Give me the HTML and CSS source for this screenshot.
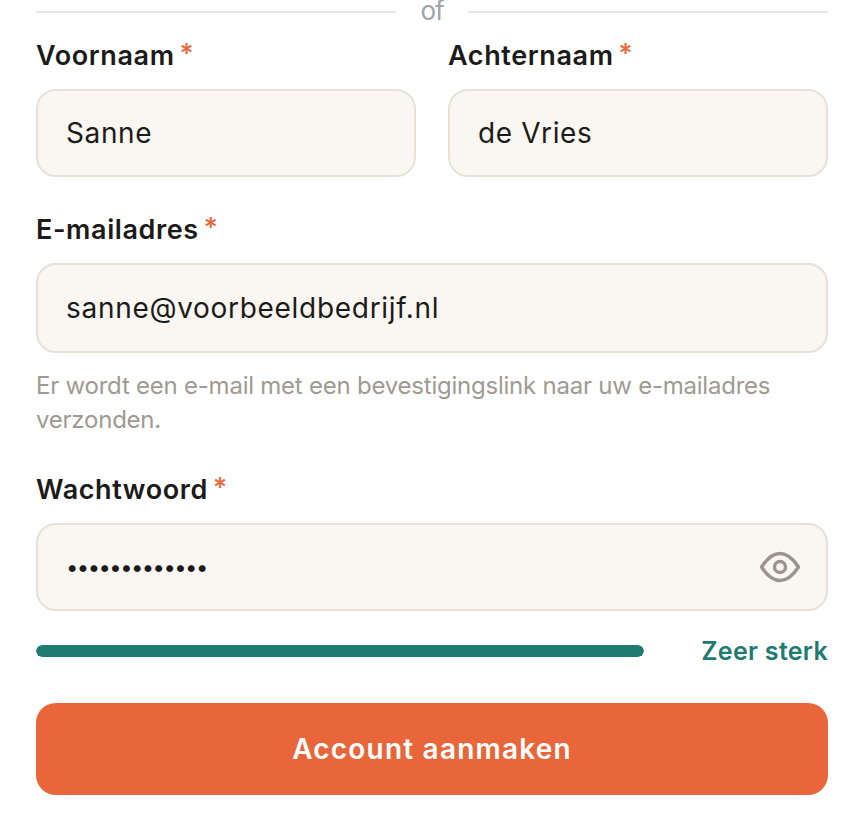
FILE: index.html
```html
<!DOCTYPE html>
<html lang="nl">
<head>
  <meta charset="UTF-8">
  <meta name="viewport" content="width=device-width, initial-scale=1.0">
  <title>Account aanmaken</title>
  <link rel="stylesheet" href="styles.css">
</head>
<body>
  <form class="signup-form">
    <div class="divider">
      <span class="divider-line"></span>
      <span class="divider-text">of</span>
      <span class="divider-line"></span>
    </div>

    <div class="name-row">
      <div class="form-group">
        <label for="first-name">Voornaam<span class="required">*</span></label>
        <input type="text" id="first-name" value="Sanne">
      </div>
      <div class="form-group">
        <label for="last-name">Achternaam<span class="required">*</span></label>
        <input type="text" id="last-name" value="de Vries">
      </div>
    </div>

    <div class="form-group email-group">
      <label for="email">E-mailadres<span class="required">*</span></label>
      <input type="email" id="email" class="input-tall" value="sanne@voorbeeldbedrijf.nl">
      <p class="hint">Er wordt een e-mail met een bevestigingslink naar uw e-mailadres verzonden.</p>
    </div>

    <div class="form-group password-group">
      <label for="password">Wachtwoord<span class="required">*</span></label>
      <div class="password-field">
        <input type="password" id="password" value="Sanne2024!xyz">
        <button type="button" class="eye-btn" aria-label="Wachtwoord tonen">
          <svg width="40" height="32" viewBox="0 0 40 32" fill="none" stroke="#9b958d" stroke-width="3.4" stroke-linejoin="round">
            <path d="M1.5 16 C7 7.5 13 2.5 20 2.5 C27 2.5 33 7.500 38.500 16 C33 24.500 27 29.500 20 29.500 C13 29.500 7 24.500 1.500 16 Z"/>
            <circle cx="20" cy="16" r="5.500"/>
          </svg>
        </button>
      </div>
    </div>

    <div class="strength">
      <div class="strength-track"><div class="strength-bar"></div></div>
      <span class="strength-label">Zeer sterk</span>
    </div>

    <button type="submit" class="submit-btn">Account aanmaken</button>
  </form>
</body>
</html>
```

FILE: styles.css
```css
/* Reset */
* {
  box-sizing: border-box;
  margin: 0;
  padding: 0;
}

body {
  font-family: 'Inter', 'Liberation Sans', sans-serif;
  background-color: #ffffff;
  color: #1c1b1a;
  overflow: hidden;
}

.signup-form {
  display: flex;
  flex-direction: column;
  padding: 0 36px;
}

/* Divider */
.divider {
  display: flex;
  align-items: center;
  gap: 24px;
  height: 38px;
  margin-top: -7px;
}

.divider-line {
  flex: 1;
  height: 2px;
  background-color: #e5e7eb;
}

.divider-text {
  font-size: 26px;
  line-height: 36px;
  letter-spacing: -1px;
  margin-bottom: 2px;
  color: #9ca3af;
}

/* Fields */
.name-row {
  display: grid;
  grid-template-columns: 1fr 1fr;
  gap: 32px;
  margin-top: 8px;
}

.form-group {
  display: flex;
  flex-direction: column;
}

.form-group label {
  font-size: 27px;
  font-weight: 600;
  line-height: 34px;
  letter-spacing: 0.6px;
  margin-bottom: 16px;
}

.required {
  color: #e8663a;
  font-weight: 500;
  line-height: 0;
  margin-left: 5px;
  vertical-align: 2px;
}

.form-group input {
  width: 100%;
  height: 88px;
  padding: 0 28px;
  font-family: inherit;
  font-size: 28px;
  letter-spacing: 0.6px;
  color: #1c1b1a;
  background-color: #faf7f2;
  border: 2px solid #e8e1d8;
  border-radius: 20px;
  outline: none;
}

.form-group .input-tall {
  height: 90px;
  letter-spacing: 0.7px;
}

.form-group input[type="password"] {
  font-size: 22px;
  letter-spacing: -1.55px;
}

.email-group {
  margin-top: 36px;
}

.hint {
  margin-top: 16px;
  font-size: 24px;
  line-height: 34px;
  letter-spacing: -0.23px;
  color: #a09a92;
}

.password-group {
  margin-top: 36px;
}

.password-field {
  position: relative;
}

.eye-btn {
  position: absolute;
  top: 50%;
  right: 28px;
  transform: translateY(-50%);
  display: flex;
  background: none;
  border: none;
}

/* Strength meter */
.strength {
  display: flex;
  align-items: center;
  justify-content: space-between;
  margin-top: 22px;
}

.strength-track {
  width: 608px;
  height: 12px;
  border-radius: 6px;
  overflow: hidden;
}

.strength-bar {
  height: 100%;
  background-color: #1e7b6f;
  border-radius: 6px;
}

.strength-label {
  font-size: 25px;
  font-weight: 600;
  line-height: 36px;
  letter-spacing: 0.3px;
  color: #1e7b6f;
}

/* Submit */
.submit-btn {
  height: 92px;
  margin-top: 34px;
  font-family: inherit;
  font-size: 28px;
  font-weight: 600;
  letter-spacing: 1.2px;
  color: #ffffff;
  background-color: #e8663a;
  border: none;
  border-radius: 20px;
}
```
